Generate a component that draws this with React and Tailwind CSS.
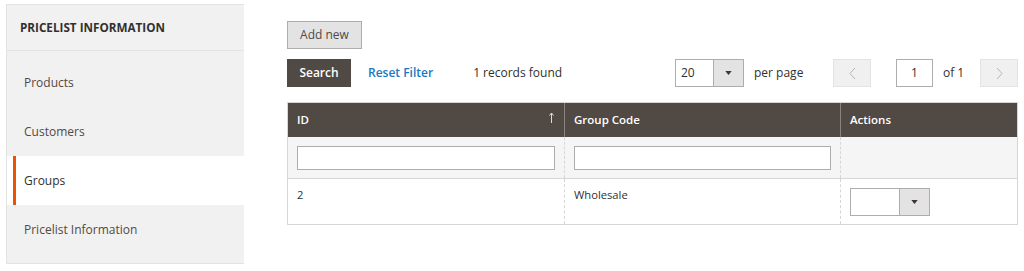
import React from 'react';

const navItems = ['Products', 'Customers', 'Groups', 'Pricelist Information'];

const Caret = () => (
  <svg width="7" height="4" viewBox="0 0 8 5" className="fill-[#41362f]">
    <path d="M0 0h8L4 5z" />
  </svg>
);

const Sidebar = () => (
  <div className="ml-[6px] mt-[4px] w-[238px] h-[260px] bg-[#f1f1f1] border border-[#e3e3e3] border-r-0 flex flex-col">
    <div className="h-[46px] flex items-center px-[13px] border-b border-[#e3e3e3] text-[11.7px] font-bold text-[#303030]">
      PRICELIST INFORMATION
    </div>
    <div className="pt-[7px] flex flex-col">
      {navItems.map(item => (
        item === 'Groups' ? (
          <div key={item} className="h-[49px] bg-white flex items-center -mr-px">
            <div className="ml-[6px] w-[3px] h-full bg-[#eb5202]" />
            <span className="ml-[8px] text-[12px] text-[#303030]">{item}</span>
          </div>
        ) : (
          <div key={item} className="h-[49px] flex items-center pl-[17px] text-[12px] text-[#514943]">
            {item}
          </div>
        )
      ))}
    </div>
  </div>
);

const Toolbar = () => (
  <div className="flex items-center mt-[10px] h-[28px]">
    <button className="h-[28px] w-[64px] bg-[#514943] border border-[#514943] text-white text-[12px] font-semibold">
      Search
    </button>
    <span className="ml-[17px] text-[12px] font-semibold text-[#1979c3]">Reset Filter</span>
    <span className="ml-[40px] text-[12px] text-[#303030]">1 records found</span>
    <div className="ml-auto flex items-center">
      <div className="flex h-[28px] w-[69px] border border-[#adadad] bg-white">
        <span className="flex-1 flex items-center pl-[5px] text-[12px] text-[#303030]">20</span>
        <span className="w-[30px] flex items-center justify-center bg-[#e3e3e3] border-l border-[#adadad]">
          <Caret />
        </span>
      </div>
      <span className="ml-[10px] w-[79px] text-[12px] text-[#303030]">per page</span>
      <button className="w-[38px] h-[28px] bg-[#f0f0f0] border border-[#e3e3e3] flex items-center justify-center text-[#b5b5b5]">
        <svg width="7" height="13" viewBox="0 0 7 13" fill="none" stroke="currentColor" strokeWidth="1">
          <path d="M6 1L1 6.5 6 12" />
        </svg>
      </button>
      <div className="ml-[25px] w-[37px] h-[28px] border border-[#adadad] bg-white flex items-center justify-center text-[12px] text-[#303030]">
        1
      </div>
      <span className="ml-[10px] w-[37px] text-[12px] text-[#303030]">of 1</span>
      <button className="w-[38px] h-[28px] bg-[#f0f0f0] border border-[#e3e3e3] flex items-center justify-center text-[#b5b5b5]">
        <svg width="7" height="13" viewBox="0 0 7 13" fill="none" stroke="currentColor" strokeWidth="1">
          <path d="M1 1l5 5.5L1 12" />
        </svg>
      </button>
    </div>
  </div>
);

const Grid = () => (
  <div className="mt-[15px] border border-[#d6d6d6]">
    <div className="grid grid-cols-[277px_276px_1fr] h-[34px] bg-[#514943] text-white text-[11.5px] font-semibold">
      <div className="flex items-center justify-between px-[9px] border-r border-[#8a837f]">
        <span>ID</span>
        <svg width="5" height="11" viewBox="0 0 5 11" fill="none" stroke="#e0dcd8" strokeWidth="1" className="-mt-[6px] mr-[1px]">
          <path d="M2.5 11V1M0.5 3.5L2.5 1l2 2.5" />
        </svg>
      </div>
      <div className="flex items-center px-[9px] border-r border-[#8a837f]">Group Code</div>
      <div className="flex items-center px-[9px]">Actions</div>
    </div>
    <div className="grid grid-cols-[277px_276px_1fr] h-[42px] bg-[#f5f5f5] border-b border-[#d6d6d6]">
      <div className="flex items-center px-[9px] border-r border-dashed border-[#d6d6d6]">
        <input className="w-full h-[24px] bg-white border border-[#adadad] outline-none" />
      </div>
      <div className="flex items-center px-[9px] border-r border-dashed border-[#d6d6d6]">
        <input className="w-full h-[24px] bg-white border border-[#adadad] outline-none" />
      </div>
      <div />
    </div>
    <div className="grid grid-cols-[277px_276px_1fr] h-[45px] bg-white text-[11.2px] text-[#303030]">
      <div className="pt-[8px] px-[9px] border-r border-dashed border-[#d6d6d6]">2</div>
      <div className="pt-[8px] px-[9px] border-r border-dashed border-[#d6d6d6]">Wholesale</div>
      <div className="flex items-center px-[9px]">
        <div className="flex w-[80px] h-[28px] border border-[#adadad] bg-white">
          <span className="flex-1" />
          <span className="w-[30px] flex items-center justify-center bg-[#e3e3e3] border-l border-[#adadad]">
            <Caret />
          </span>
        </div>
      </div>
    </div>
  </div>
);

export default function App() {
  return (
    <div className="w-[1024px] h-[271px] bg-white flex font-['Open_Sans',sans-serif] overflow-hidden">
      <Sidebar />
      <div className="ml-[43px] w-[731px] pt-[21px]">
        <button className="h-[28px] w-[75px] bg-[#e3e3e3] border border-[#adadad] text-[12px] text-[#514943]">
          Add new
        </button>
        <Toolbar />
        <Grid />
      </div>
    </div>
  );
}
